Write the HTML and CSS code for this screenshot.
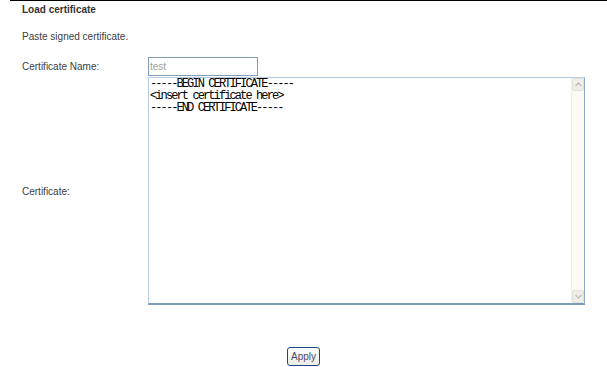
FILE: index.html
```html
<!DOCTYPE html>
<html lang="en">
<head>
  <meta charset="UTF-8" />
  <title>Load certificate</title>
  <link rel="stylesheet" href="styles.css">
</head>
<body>
  <div class="page">
    <div class="title">Load certificate</div>
    <p class="hint">Paste signed certificate.</p>

    <div class="row row-name">
      <label class="label" for="certName">Certificate Name:</label>
      <input type="text" id="certName" class="name-input" value="test">
    </div>

    <div class="row row-cert">
      <label class="label" for="cert">Certificate:</label>
      <div class="cert-box">
        <textarea id="cert" class="cert-area">-----BEGIN CERTIFICATE-----
&lt;insert certificate here&gt;
-----END CERTIFICATE-----</textarea>
        <div class="scrollbar">
          <span class="sb-btn">
            <svg width="7" height="5" viewBox="0 0 7 5"><path d="M0.5 4 L3.5 1 L6.5 4" fill="none" stroke="#c2c2ba" stroke-width="1.5"/></svg>
          </span>
          <span class="sb-track"></span>
          <span class="sb-btn">
            <svg width="7" height="5" viewBox="0 0 7 5"><path d="M0.5 1 L3.5 4 L6.5 1" fill="none" stroke="#c2c2ba" stroke-width="1.5"/></svg>
          </span>
        </div>
      </div>
    </div>

    <div class="actions">
      <button class="btn">Apply</button>
    </div>
  </div>
</body>
</html>
```

FILE: styles.css
```css
body {
  margin: 0;
  background: #ffffff;
  color: #404040;
  font-family: "Liberation Sans", Arial, sans-serif;
  font-size: 10px;
}

.page {
  margin-left: 10px;
  border-top: 1px solid #000000;
  padding-left: 12px;
}

.title {
  font-weight: bold;
  color: #333333;
  margin-top: 3px;
}

.hint {
  margin: 16px 0 0 0;
}

.row {
  display: flex;
  align-items: center;
}

.row-name {
  margin-top: 15px;
}

.label {
  width: 126px;
  flex-shrink: 0;
}

.name-input {
  width: 110px;
  height: 19px;
  box-sizing: border-box;
  margin: 0;
  border: 1px solid #7f9db9;
  padding: 0 1px;
  font-family: "Liberation Sans", Arial, sans-serif;
  font-size: 10px;
  color: #a0a0a0;
  outline: none;
}

.row-cert {
  margin-top: 1px;
}

.cert-box {
  display: flex;
  width: 437px;
  height: 228px;
  box-sizing: border-box;
  border-style: solid;
  border-width: 1px 1px 2px 1px;
  border-color: #b8cbe0 #8aa8c8 #7a9cbf #b8cbe0;
}

.cert-area {
  flex: 1;
  margin: 0;
  padding: 0 1px;
  border: none;
  resize: none;
  overflow: hidden;
  outline: none;
  font-family: "Liberation Mono", "DejaVu Sans Mono", monospace;
  font-size: 12px;
  letter-spacing: -1.9px;
  line-height: 12px;
  color: #000000;
  background: #ffffff;
}

.scrollbar {
  width: 12px;
  display: flex;
  flex-direction: column;
  background: #fbfbf3;
  border-left: 1px solid #f0f0e8;
}

.sb-btn {
  height: 13px;
  display: flex;
  align-items: center;
  justify-content: center;
  background: #efefe8;
  border: 1px solid #e2e2da;
  border-radius: 2px;
  box-sizing: border-box;
}

.sb-track {
  flex: 1;
}

.actions {
  display: flex;
  justify-content: center;
  margin: 42px 0 0 -22px;
}

.btn {
  font-family: "Liberation Sans", Arial, sans-serif;
  font-size: 10px;
  color: #4a4a6a;
  background: linear-gradient(#ffffff, #ecebe4);
  border: 1px solid #1c4a7a;
  border-radius: 3px;
  padding: 1px 3px;
  width: 33px;
  height: 19px;
}
```
